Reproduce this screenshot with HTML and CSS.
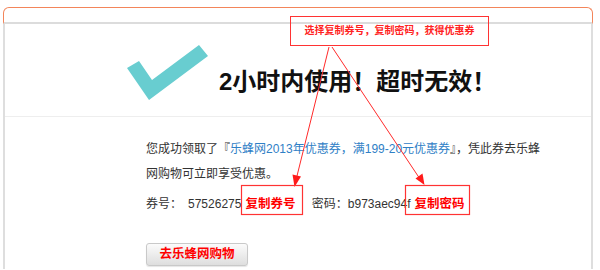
FILE: index.html
```html
<!DOCTYPE html>
<html lang="zh-CN">
  <head>
    <meta charset="UTF-8" />
    <title>领取优惠券</title>
    <link rel="stylesheet" href="styles.css">
  </head>
  <body>
    <div class="panel">
      <div class="panelHead"></div>
      <div class="panelBody">
        <div class="result">
          <svg class="checkIcon" width="82" height="56" viewBox="0 0 82 56">
            <polygon points="1,23 13,16 26,35 73,0 82,11 23,55" fill="#68cdd0" />
          </svg>
          <h1 class="resultTitle">2小时内使用！超时无效！</h1>
        </div>
        <div class="coupon">
          <p class="couponDesc">您成功领取了『<a class="couponName" href="#">乐蜂网2013年优惠券，满199-20元优惠券</a>』，凭此券去乐蜂网购物可立即享受优惠。</p>
          <div class="couponCodes">
            <span class="codeLabel">券号：</span><span class="codeValue codeNo">57526275</span><a class="copyLink" href="#">复制券号</a>
            <span class="codeLabel pwdLabel">密码：</span><span class="codeValue">b973aec94f</span><a class="copyLink" href="#">复制密码</a>
          </div>
          <a class="goButton" href="#">去乐蜂网购物</a>
        </div>
      </div>
    </div>

    <!-- screenshot annotation layer -->
    <div class="noteBox">选择复制券号，复制密码，获得优惠券</div>
    <svg class="noteMarks" width="600" height="270" viewBox="0 0 600 270">
      <line x1="329" y1="47" x2="295" y2="184" stroke="#ff2a2a" stroke-width="1" />
      <line x1="332" y1="47" x2="422" y2="182" stroke="#ff2a2a" stroke-width="1" />
      <polygon points="294.5,187 301,176.5 292.5,174.5" fill="#ff1a1a" />
      <polygon points="424.5,185 422.5,173.5 415.5,178.5" fill="#ff1a1a" />
      <rect x="241.5" y="185.5" width="61" height="29" fill="none" stroke="#ff3333" stroke-width="1.2" />
      <rect x="405.5" y="185.5" width="64" height="29" fill="none" stroke="#ff3333" stroke-width="1.2" />
    </svg>
  </body>
</html>
```

FILE: styles.css
```css
body {
  margin: 0;
  background: #fff;
  font-family: "Liberation Sans", "Noto Sans CJK SC", sans-serif;
  color: #333;
}
.panel {
  margin: 7px 0 0 3px;
  width: 590px;
}
.panelHead {
  height: 14px;
  border: 1px solid #f3855a;
  border-bottom: 2px solid #dcdcdc;
  border-radius: 6px 6px 0 0;
}
.panelBody {
  min-height: 245px;
  border-left: 2px solid #dedede;
  border-right: 2px solid #dedede;
}
.result {
  display: flex;
  align-items: flex-start;
  height: 92px;
  padding-left: 121px;
  border-bottom: 1px solid #eeeeee;
}
.checkIcon {
  margin-top: 21px;
  flex-shrink: 0;
}
.resultTitle {
  margin: 43px 0 0 11px;
  font-size: 24px;
  line-height: 30px;
  font-weight: bold;
  color: #111;
}
.coupon {
  padding: 20px 0 0 141px;
  font-size: 12px;
}
.couponDesc {
  width: 400px;
  margin: 0;
  line-height: 25px;
}
.couponName {
  color: #2f80c6;
  text-decoration: none;
}
.couponCodes {
  line-height: 30px;
  margin-top: 2px;
}
.codeNo {
  margin-left: 6px;
}
.copyLink {
  margin-left: 4px;
  color: #f00;
  font-weight: bold;
  font-size: 12.5px;
  text-decoration: none;
}
.pwdLabel {
  margin-left: 13px;
}
.goButton {
  display: block;
  width: 100px;
  height: 21px;
  margin-top: 24px;
  line-height: 21px;
  text-align: center;
  color: #f00;
  font-weight: bold;
  font-size: 12.5px;
  text-decoration: none;
  border: 1px solid #c9c9c9;
  border-radius: 3px;
  background: linear-gradient(#fbfbfb, #dedede);
  box-shadow: 0 1px 1px rgba(0, 0, 0, 0.1);
}
.noteBox {
  position: absolute;
  left: 290px;
  top: 16px;
  width: 197px;
  height: 28px;
  line-height: 28px;
  border: 1px solid #ff3333;
  text-align: center;
  font-size: 10px;
  font-weight: bold;
  color: #ff2222;
}
.noteMarks {
  position: absolute;
  left: 0;
  top: 0;
  pointer-events: none;
}
```
